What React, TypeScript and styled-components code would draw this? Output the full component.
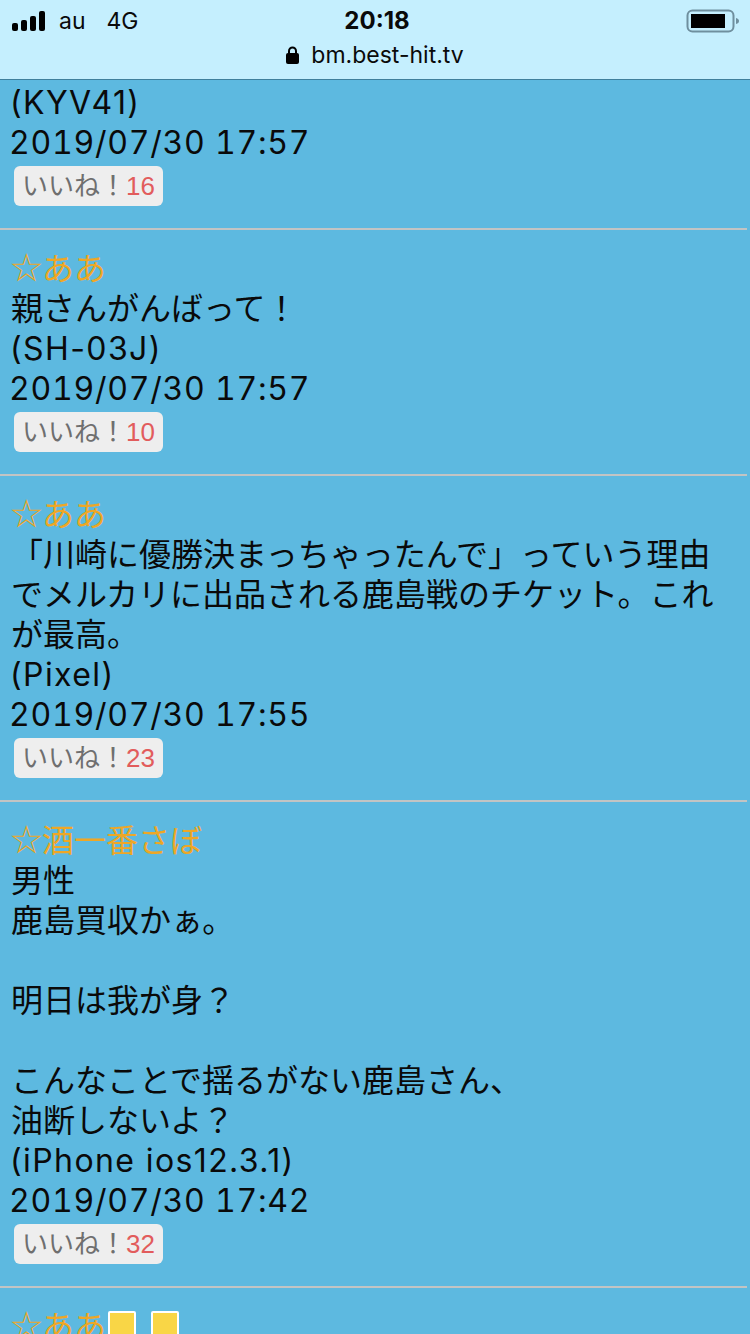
import React from "react";
import styled, { createGlobalStyle } from "styled-components";

const Global = createGlobalStyle`
  html, body { margin: 0; padding: 0; height: 1334px; overflow: hidden; background: #5db9e0; }
  #root { height: 1334px; overflow: hidden; }
`;

const Page = styled.div`
  width: 750px;
  font-family: Inter, "Noto Sans CJK JP", sans-serif;
  color: #0a0a0a;
  font-size: 32px;
  line-height: 40px;
`;

const Header = styled.header`
  height: 79px;
  background: #c5effe;
  border-bottom: 1px solid #3f7f9c;
  display: grid;
  grid-template-columns: 1fr auto 1fr;
  grid-template-rows: 42px 26px;
`;

const StatusLeft = styled.div`
  display: flex;
  align-items: center;
  padding-left: 12px;
  font-size: 23px;
  line-height: 24px;
  font-weight: 400;
  gap: 14px;
`;

const Carrier = styled.span`
  margin-right: 7px;
`;

const Clock = styled.div`
  font-size: 24px;
  font-weight: 700;
  line-height: 24px;
  display: flex;
  align-items: center;
  padding-left: 4px;
`;

const StatusRight = styled.div`
  display: flex;
  align-items: center;
  justify-content: flex-end;
  padding-right: 11px;
`;

const Url = styled.div`
  grid-column: 1 / 4;
  display: flex;
  justify-content: center;
  align-items: center;
  gap: 12px;
  font-size: 23px;
  line-height: 26px;
`;

const Feed = styled.main`
  padding-top: 3px;
`;

const Post = styled.article`
  padding: 19px 0 22px 11px;
  border-bottom: 2px solid #c2c4c4;
  margin-right: 3px;
  &:first-child { padding-top: 0; }
  &:last-child { border-bottom: 0; }
`;

const Name = styled.div`
  color: #eea726;
  display: flex;
  align-items: flex-start;
  height: 40px;
`;

const Star = styled.span`
  display: block;
  flex: none;
  width: 33px;
  margin: -1px 0 0 -2px;
  font-family: "DejaVu Sans", sans-serif;
  font-size: 39px;
  text-align: center;
`;

const Line = styled.div`
  min-height: 40px;
  white-space: pre-wrap;
  width: 712px;
`;

const Device = styled.div`
  height: 40px;
  margin-left: -1px;
  white-space: nowrap;
  letter-spacing: 1.4px;
`;

const Timestamp = styled.div`
  height: 40px;
  margin-left: -2px;
  white-space: nowrap;
  font-variant-numeric: tabular-nums;
  letter-spacing: 0.75px;
`;

const Like = styled.div`
  display: inline-flex;
  align-items: center;
  width: 149px;
  height: 40px;
  box-sizing: border-box;
  margin: 3px 0 0 3px;
  padding-left: 8px;
  background: #eeeeee;
  border-radius: 6px;
  font-size: 26px;
  color: #6f6f6f;
  white-space: nowrap;
`;

const Count = styled.span`
  color: #e25c5c;
  font-family: "Liberation Sans", sans-serif;
`;

const Emoji = styled.span`
  display: block;
  flex: none;
  width: 24px;
  height: 40px;
  margin-top: 4px;
  margin-left: 2px;
  background: #f9d646;
  border: 2px solid #fff;
  border-radius: 2px;
  & + & { margin-left: 15px; }
`;

const SignalIcon = () => (
  <svg width="33" height="20" viewBox="0 0 33 20" fill="#000">
    <rect x="0" y="12" width="6" height="8" rx="2" />
    <rect x="9" y="9" width="6" height="11" rx="2" />
    <rect x="18" y="5" width="6" height="15" rx="2" />
    <rect x="27" y="0" width="6" height="20" rx="2" />
  </svg>
);

const BatteryIcon = () => (
  <svg width="53" height="24" viewBox="0 0 53 24">
    <rect x="1.500" y="1.500" width="46" height="21" rx="5" fill="none" stroke="#6f8f9e" strokeWidth="2" />
    <rect x="5" y="5" width="34" height="14" fill="#000" />
    <path d="M50 9c2 .5 3 1.500 3 3s-1 2.500-3 3z" fill="#6f8f9e" />
  </svg>
);

const LockIcon = () => (
  <svg width="13" height="18" viewBox="0 0 13 18" fill="#000">
    <path d="M3 8V5a3.500 3.500 0 0 1 7 0v3" fill="none" stroke="#000" strokeWidth="2" />
    <rect x="0" y="7" width="13" height="11" rx="2" />
  </svg>
);

type PostData = { name?: string; lines: string[]; device: string; date: string; likes: number };

const posts: PostData[] = [
  { lines: [], device: "(KYV41)", date: "2019/07/30 17:57", likes: 16 },
  { name: "ああ", lines: ["親さんがんばって！"], device: "(SH-03J)", date: "2019/07/30 17:57", likes: 10 },
  {
    name: "ああ",
    lines: ["「川崎に優勝決まっちゃったんで」っていう理由でメルカリに出品される鹿島戦のチケット。これが最高。"],
    device: "(Pixel)",
    date: "2019/07/30 17:55",
    likes: 23,
  },
  {
    name: "酒一番さぼ",
    lines: ["男性", "鹿島買収かぁ。", "", "明日は我が身？", "", "こんなことで揺るがない鹿島さん、", "油断しないよ？"],
    device: "(iPhone ios12.3.1)",
    date: "2019/07/30 17:42",
    likes: 32,
  },
];

export default function App() {
  return (
    <Page>
      <Global />
      <Header>
        <StatusLeft>
          <SignalIcon />
          <Carrier>au</Carrier>
          <span>4G</span>
        </StatusLeft>
        <Clock>20:18</Clock>
        <StatusRight>
          <BatteryIcon />
        </StatusRight>
        <Url>
          <LockIcon />
          bm.best-hit.tv
        </Url>
      </Header>
      <Feed>
        {posts.map((p, i) => (
          <Post key={i}>
            {p.name && (
              <Name>
                <Star>☆</Star>
                {p.name}
              </Name>
            )}
            {p.lines.map((l, j) => (
              <Line key={j}>{l}</Line>
            ))}
            <Device>{p.device}</Device>
            <Timestamp>{p.date}</Timestamp>
            <Like>
              いいね！<Count>{p.likes}</Count>
            </Like>
          </Post>
        ))}
        <Post>
          <Name>
            <Star>☆</Star>
            ああ
            <Emoji />
            <Emoji />
          </Name>
        </Post>
      </Feed>
    </Page>
  );
}
